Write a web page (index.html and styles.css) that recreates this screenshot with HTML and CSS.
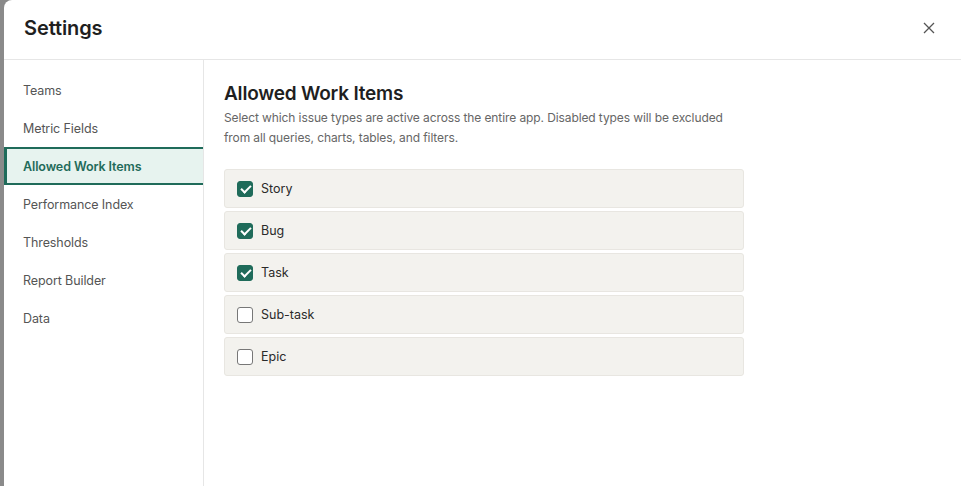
FILE: index.html
```html
<!DOCTYPE html>
<html lang="en">
<head>
    <meta charset="UTF-8">
    <meta name="viewport" content="width=device-width, initial-scale=1.0">
    <title>Settings</title>
    <link rel="stylesheet" href="styles.css">
</head>
<body>

    <div class="modal">
        <header class="modal-header">
            <h1>Settings</h1>
            <button class="close-btn" aria-label="Close">
                <svg width="12" height="12" viewBox="0 0 12 12">
                    <path d="M1 1 L11 11 M11 1 L1 11" stroke="#555" stroke-width="1.3" fill="none"/>
                </svg>
            </button>
        </header>

        <div class="modal-body">
            <nav class="side-nav">
                <a href="#">Teams</a>
                <a href="#">Metric Fields</a>
                <a href="#" class="active">Allowed Work Items</a>
                <a href="#">Performance Index</a>
                <a href="#">Thresholds</a>
                <a href="#">Report Builder</a>
                <a href="#">Data</a>
            </nav>

            <section class="content">
                <h2>Allowed Work Items</h2>
                <p class="desc">Select which issue types are active across the entire app. Disabled types will be excluded from all queries, charts, tables, and filters.</p>

                <div class="type-list">
                    <label class="type-row"><span class="check on"></span>Story</label>
                    <label class="type-row"><span class="check on"></span>Bug</label>
                    <label class="type-row"><span class="check on"></span>Task</label>
                    <label class="type-row"><span class="check"></span>Sub-task</label>
                    <label class="type-row"><span class="check"></span>Epic</label>
                </div>
            </section>
        </div>
    </div>

</body>
</html>
```

FILE: styles.css
```css
body {
    font-family: Inter, "Noto Sans", sans-serif;
    margin: 0;
    padding: 0;
    background-color: #8a8a8a;
    height: 486px;
    overflow: hidden;
}

.modal {
    margin-left: 4px;
    height: 486px;
    background-color: white;
    border-top-left-radius: 8px;
    display: flex;
    flex-direction: column;
}

.modal-header {
    height: 60px;
    border-bottom: 1px solid #e6e6e6;
    display: flex;
    align-items: center;
    justify-content: space-between;
    padding: 0 26px 3px 20px;
    box-sizing: border-box;
    flex-shrink: 0;
}

.modal-header h1 {
    margin: 0;
    font-size: 20px;
    font-weight: 600;
    color: #1f1f1f;
    letter-spacing: -0.1px;
}

.close-btn {
    background: none;
    border: none;
    padding: 0;
    cursor: pointer;
    display: flex;
}

.modal-body {
    display: flex;
    flex: 1;
}

.side-nav {
    width: 199px;
    border-right: 1px solid #e6e6e6;
    padding-top: 11px;
    display: flex;
    flex-direction: column;
}

.side-nav a {
    height: 38px;
    display: flex;
    align-items: center;
    padding-left: 16px;
    font-size: 12.5px;
    color: #555;
    text-decoration: none;
    box-sizing: border-box;
    border: 2px solid transparent;
    border-left-width: 3px;
    border-right: none;
    letter-spacing: -0.1px;
}

.side-nav a.active {
    background-color: #e7f3ef;
    border-color: #1f6b5a;
    color: #1f6b5a;
    font-weight: 600;
}

.content {
    padding: 22px 20px;
    flex: 1;
}

.content h2 {
    margin: 0;
    font-size: 19px;
    font-weight: 600;
    color: #1f1f1f;
    letter-spacing: -0.2px;
}

.desc {
    margin: 3px 0 21px;
    font-size: 12px;
    line-height: 20px;
    color: #666;
    width: 510px;
    letter-spacing: -0.1px;
}

.type-list {
    width: 520px;
    display: flex;
    flex-direction: column;
    gap: 3px;
}

.type-row {
    height: 39px;
    box-sizing: border-box;
    background-color: #f3f2ee;
    border: 1px solid #e8e6e1;
    border-radius: 3px;
    display: flex;
    align-items: center;
    padding-left: 12px;
    font-size: 12.5px;
    color: #2a2a2a;
    cursor: pointer;
}

.check {
    width: 16px;
    height: 16px;
    box-sizing: border-box;
    border: 1px solid #777;
    border-radius: 3px;
    background-color: white;
    margin-right: 8px;
    position: relative;
}

.check.on {
    background-color: #1f6b5a;
    border-color: #1f6b5a;
}

.check.on::after {
    content: "";
    position: absolute;
    left: 5px;
    top: 1px;
    width: 4px;
    height: 8px;
    border: solid white;
    border-width: 0 2px 2px 0;
    transform: rotate(45deg);
}
```
